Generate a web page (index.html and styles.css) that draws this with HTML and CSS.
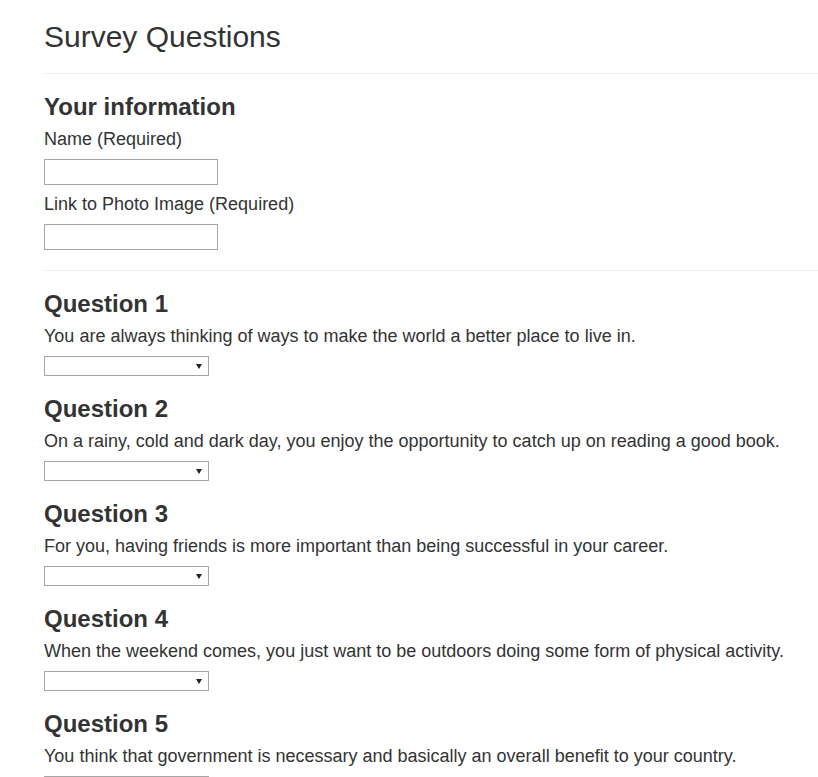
FILE: index.html
```html
<!DOCTYPE html>
<html>
<head>
<meta charset="utf-8">
<title>Survey Questions</title>
<link rel="stylesheet" href="styles.css">
</head>
<body>
<div class="page">
  <h2 class="title">Survey Questions</h2>
  <hr class="rule">
  <section class="info">
    <h3 class="heading">Your information</h3>
    <label class="label" for="name">Name (Required)</label>
    <input class="field" id="name" type="text">
    <label class="label" for="photo">Link to Photo Image (Required)</label>
    <input class="field last" id="photo" type="text">
  </section>
  <hr class="rule">
  <section class="question">
    <h3 class="heading">Question 1</h3>
    <p class="text">You are always thinking of ways to make the world a better place to live in.</p>
    <span class="select-wrap"><select class="choice"><option></option><option>1 (Strongly Disagree)</option><option>2</option><option>3</option><option>4</option><option>5 (Strongly Agree)</option></select></span>
  </section>
  <section class="question">
    <h3 class="heading">Question 2</h3>
    <p class="text">On a rainy, cold and dark day, you enjoy the opportunity to catch up on reading a good book.</p>
    <span class="select-wrap"><select class="choice"><option></option><option>1 (Strongly Disagree)</option><option>2</option><option>3</option><option>4</option><option>5 (Strongly Agree)</option></select></span>
  </section>
  <section class="question">
    <h3 class="heading">Question 3</h3>
    <p class="text">For you, having friends is more important than being successful in your career.</p>
    <span class="select-wrap"><select class="choice"><option></option><option>1 (Strongly Disagree)</option><option>2</option><option>3</option><option>4</option><option>5 (Strongly Agree)</option></select></span>
  </section>
  <section class="question">
    <h3 class="heading">Question 4</h3>
    <p class="text">When the weekend comes, you just want to be outdoors doing some form of physical activity.</p>
    <span class="select-wrap"><select class="choice"><option></option><option>1 (Strongly Disagree)</option><option>2</option><option>3</option><option>4</option><option>5 (Strongly Agree)</option></select></span>
  </section>
  <section class="question">
    <h3 class="heading">Question 5</h3>
    <p class="text">You think that government is necessary and basically an overall benefit to your country.</p>
    <span class="select-wrap"><select class="choice"><option></option><option>1 (Strongly Disagree)</option><option>2</option><option>3</option><option>4</option><option>5 (Strongly Agree)</option></select></span>
  </section>
</div>
</body>
</html>
```

FILE: styles.css
```css
html, body {
  margin: 0;
  padding: 0;
  background: #fff;
}

body {
  font-family: "Liberation Sans", Arial, sans-serif;
  color: #333;
  overflow: hidden;
}

.page {
  padding-left: 44px;
}

.title {
  margin: 20px 0 0;
  font-size: 30px;
  line-height: 33px;
  font-weight: normal;
}

.rule {
  margin: 20px 0 0;
  border: 0;
  border-top: 1px solid #eee;
  height: 0;
}

.info {
  display: flex;
  flex-direction: column;
  align-items: flex-start;
}

.heading {
  margin: 20px 0 0;
  font-size: 24px;
  line-height: 26px;
  font-weight: bold;
}

.label {
  display: block;
  margin-top: 6px;
  font-size: 18px;
  line-height: 26px;
}

.field {
  display: block;
  box-sizing: border-box;
  width: 174px;
  height: 26px;
  margin: 7px 0 0;
  border: 1px solid #a6a6a6;
  padding: 0 4px;
  font: 16px "Liberation Sans", Arial, sans-serif;
  background: #fff;
  outline: none;
}

.question {
  display: flex;
  flex-direction: column;
  align-items: flex-start;
}

.text {
  margin: 6px 0 0;
  font-size: 18px;
  line-height: 26px;
}

.select-wrap {
  position: relative;
  display: block;
  margin-top: 7px;
}

.select-wrap::after {
  content: "";
  position: absolute;
  right: 7px;
  top: 8px;
  border-left: 3px solid transparent;
  border-right: 3px solid transparent;
  border-top: 5px solid #222;
  pointer-events: none;
}

.choice {
  display: block;
  box-sizing: border-box;
  width: 165px;
  height: 20px;
  margin: 0;
  padding: 0 4px;
  border: 1px solid #a6a6a6;
  border-radius: 0;
  background: #fff;
  -webkit-appearance: none;
  appearance: none;
  font: 13px "Liberation Sans", Arial, sans-serif;
  color: #333;
  outline: none;
}
```
